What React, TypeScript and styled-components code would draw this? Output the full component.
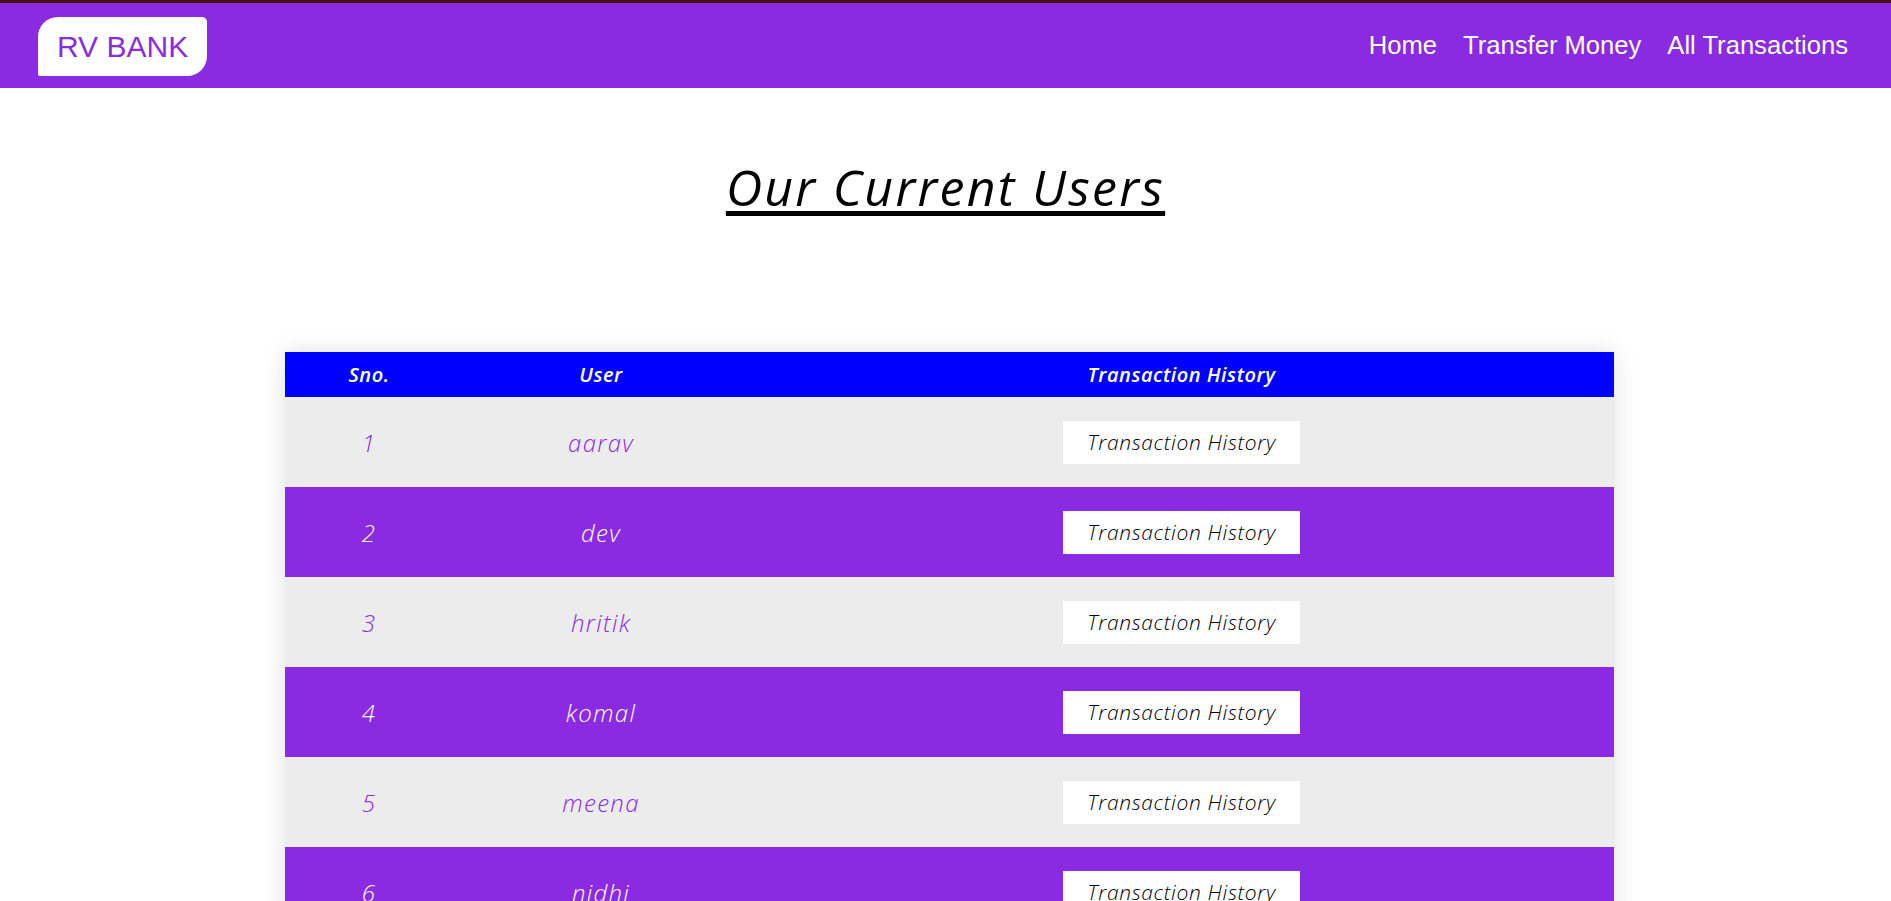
import React from "react";
import styled, { createGlobalStyle } from "styled-components";

const GlobalStyle = createGlobalStyle`
  * { box-sizing: border-box; }
  body {
    margin: 0;
    background: #ffffff;
    font-family: "Poppins", "Open Sans", sans-serif;
  }
`;

const NavBar = styled.header`
  display: flex;
  align-items: center;
  justify-content: space-between;
  height: 88px;
  border-top: 3px solid #4a0f14;
  background: #8a2be2;
  padding: 0 43px 0 38px;
`;

const Logo = styled.a`
  display: flex;
  align-items: center;
  height: 59px;
  padding: 0 19px;
  margin-top: 2px;
  background: #ffffff;
  color: #8a2be2;
  font-family: "Liberation Sans", Arial, sans-serif;
  font-size: 30px;
  text-decoration: none;
  border-radius: 20px 5px 20px 2px;
`;

const NavLinks = styled.nav`
  display: flex;
  align-items: center;
  gap: 26px;
`;

const NavLink = styled.a`
  color: #ffffff;
  font-family: "Liberation Sans", Arial, sans-serif;
  font-size: 25.6px;
  text-decoration: none;
`;

const Title = styled.h1`
  margin: 70px 0 0;
  text-align: center;
  font-family: "Open Sans", sans-serif;
  font-style: italic;
  font-weight: 400;
  font-size: 50px;
  letter-spacing: 2.3px;
  line-height: 58px;
  color: #000000;
  text-decoration: underline;
  text-decoration-thickness: 5px;
  text-underline-offset: 5px;
`;

const Table = styled.div`
  width: 1329px;
  margin: 136px 0 60px 285px;
  box-shadow: 0 0 22px rgba(0, 0, 0, 0.13);
`;

const Row = styled.div<{ $variant: "head" | "light" | "dark" }>`
  display: grid;
  grid-template-columns: 168px 296px 1fr;
  align-items: center;
  height: ${(p) => (p.$variant === "head" ? "45px" : "90px")};
  background: ${(p) =>
    p.$variant === "head" ? "#0000ff" : p.$variant === "light" ? "#ececec" : "#8a2be2"};
  color: ${(p) => (p.$variant === "light" ? "#8a2be2" : "#ffffff")};
`;

const HeadCell = styled.div`
  text-align: center;
  font-family: "Open Sans", sans-serif;
  font-style: italic;
  font-weight: 600;
  font-size: 20px;
  letter-spacing: 0.5px;
`;

const Cell = styled.div`
  display: flex;
  justify-content: center;
  align-items: center;
  font-family: "Open Sans", sans-serif;
  font-style: italic;
  font-weight: 300;
  font-size: 24px;
  letter-spacing: 1.3px;
`;

const HistoryButton = styled.button`
  width: 237px;
  height: 43px;
  border: none;
  background: #ffffff;
  color: #000000;
  font-family: "Open Sans", sans-serif;
  font-style: italic;
  font-weight: 300;
  font-size: 21px;
  letter-spacing: 0.65px;
  cursor: pointer;
`;

const users = ["aarav", "dev", "hritik", "komal", "meena", "nidhi", "priya", "rahul"];

export default function App() {
  return (
    <>
      <GlobalStyle />
      <NavBar>
        <Logo href="#">RV BANK</Logo>
        <NavLinks>
          <NavLink href="#">Home</NavLink>
          <NavLink href="#">Transfer Money</NavLink>
          <NavLink href="#">All Transactions</NavLink>
        </NavLinks>
      </NavBar>
      <main>
        <Title>Our Current Users</Title>
        <Table>
          <Row $variant="head">
            <HeadCell>Sno.</HeadCell>
            <HeadCell>User</HeadCell>
            <HeadCell>Transaction History</HeadCell>
          </Row>
          {users.map((u, i) => (
            <Row key={u} $variant={i % 2 === 0 ? "light" : "dark"}>
              <Cell>{i + 1}</Cell>
              <Cell>{u}</Cell>
              <Cell>
                <HistoryButton>Transaction History</HistoryButton>
              </Cell>
            </Row>
          ))}
        </Table>
      </main>
    </>
  );
}
